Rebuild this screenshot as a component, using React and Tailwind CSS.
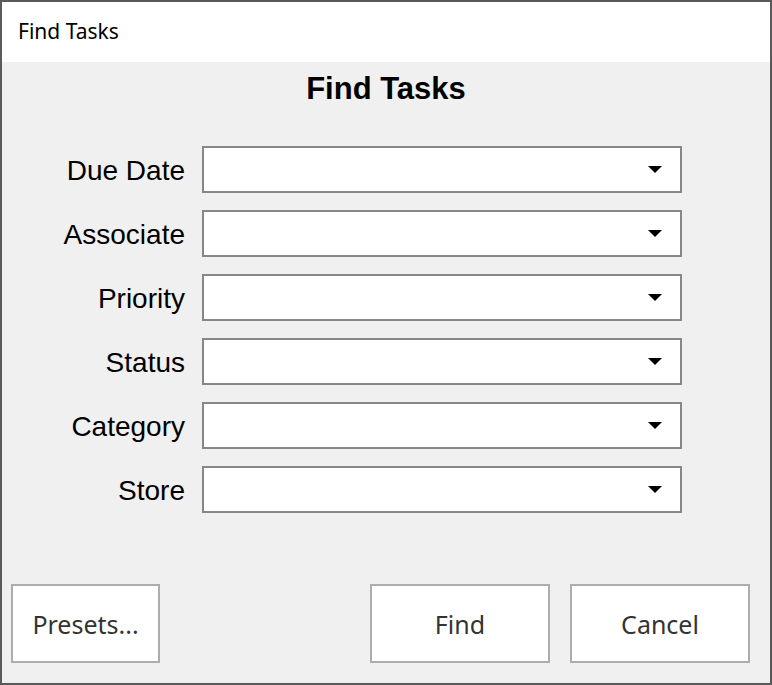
import { useState } from "react"

const fields = ["Due Date", "Associate", "Priority", "Status", "Category", "Store"]

function Combo() {
  return (
    <div className="ml-[17px] w-[480px] h-[47px] bg-white border-2 border-[#878787] flex items-center justify-end pr-[18px]">
      <svg width="14" height="8" viewBox="0 0 14 8">
        <path d="M0 0 L14 0 L7 7 Z" fill="#000" />
      </svg>
    </div>
  )
}

function Button({ children, className }) {
  return (
    <button
      className={"h-[79px] pt-[3px] bg-white border-2 border-[#adadad] text-[25px] text-[#333] " + className}
      style={{ fontFamily: '"Noto Sans", "Open Sans", sans-serif' }}
    >
      {children}
    </button>
  )
}

export default function App() {
  const [values] = useState({})

  return (
    <div className="w-[772px] h-[685px] border-2 border-[#5a5a5a] flex flex-col bg-[#f0f0f0]">

      {/* TITLE BAR */}
      <div
        className="h-[60px] bg-white flex items-center pl-4 text-[21px] text-black"
        style={{ fontFamily: '"Noto Sans", "Open Sans", sans-serif' }}
      >
        Find Tasks
      </div>

      {/* BODY */}
      <div
        className="flex-1 flex flex-col"
        style={{ fontFamily: '"Liberation Sans", Arial, sans-serif' }}
      >
        <h1 className="mt-[11px] text-center text-[31px] leading-[32px] font-bold text-black">
          Find Tasks
        </h1>

        <div className="mt-[41px] flex flex-col gap-[17px]">
          {fields.map((f) => (
            <div key={f} className="flex items-center">
              <label className="w-[183px] pt-[2px] text-right text-[28px] leading-none text-black">
                {f}
              </label>
              <Combo value={values[f]} />
            </div>
          ))}
        </div>

        <div className="flex-1" />

        {/* BUTTONS */}
        <div className="flex items-center pb-[20px]">
          <Button className="ml-[9px] w-[149px]">Presets...</Button>
          <div className="flex-1" />
          <Button className="w-[180px]">Find</Button>
          <Button className="ml-[20px] mr-[20px] w-[180px]">Cancel</Button>
        </div>
      </div>

    </div>
  )
}
